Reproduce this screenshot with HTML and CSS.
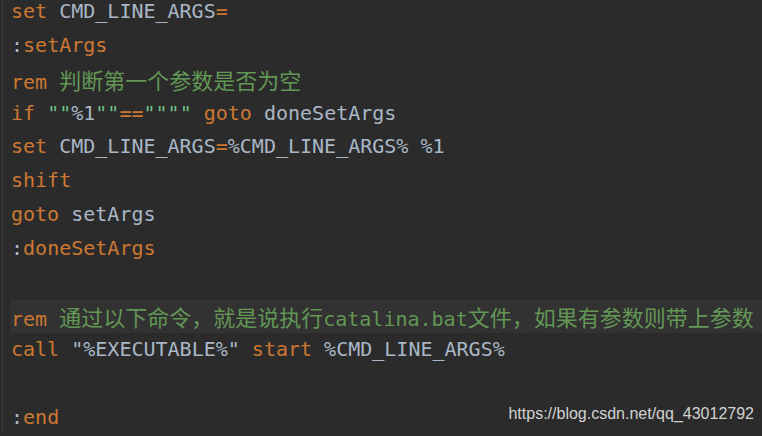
FILE: index.html
```html
<!DOCTYPE html>
<html lang="zh">
<head>
<meta charset="utf-8">
<link rel="stylesheet" href="styles.css">
</head>
<body>
<div class="editor">
  <div class="code">
    <div class="line"><span class="kw">set</span> <span class="id">CMD_LINE_ARGS</span><span class="kw">=</span></div>
    <div class="line"><span class="id">:</span><span class="kw">setArgs</span></div>
    <div class="line"><span class="kw">rem</span> <span class="cm"><span class="cjk">判断第一个参数是否为空</span></span></div>
    <div class="line"><span class="kw">if</span> <span class="str">""</span><span class="id">%1</span><span class="str">""</span><span class="kw">==</span><span class="str">""""</span> <span class="kw">goto</span> <span class="id">doneSetArgs</span></div>
    <div class="line"><span class="kw">set</span> <span class="id">CMD_LINE_ARGS</span><span class="kw">=</span><span class="id">%CMD_LINE_ARGS% %1</span></div>
    <div class="line"><span class="kw">shift</span></div>
    <div class="line"><span class="kw">goto</span> <span class="id">setArgs</span></div>
    <div class="line"><span class="id">:</span><span class="kw">doneSetArgs</span></div>
    <div class="line"></div>
    <div class="line current"><span class="kw">rem</span> <span class="cm"><span class="cjk">通过以下命令，就是说执行</span>catalina.bat<span class="cjk">文件，如果有参数则带上参数</span></span></div>
    <div class="line"><span class="kw">call</span> <span class="id">"%EXECUTABLE%"</span> <span class="kw">start</span> <span class="id">%CMD_LINE_ARGS%</span></div>
    <div class="line"></div>
    <div class="line"><span class="id">:</span><span class="kw">end</span></div>
  </div>
  <div class="watermark">https://blog.csdn.net/qq_43012792</div>
</div>
</body>
</html>
```
FILE: styles.css
```css
html, body {
  margin: 0;
  padding: 0;
  background: #2b2b2b;
  width: 762px;
  height: 436px;
  overflow: hidden;
}
.editor {
  position: relative;
  width: 762px;
  height: 436px;
  box-sizing: border-box;
  border-left: 1px solid #3d3d3d;
  margin-left: 2px;
}
.code {
  margin-top: -5px;
  padding-left: 7px;
  font-family: "DejaVu Sans Mono", "Liberation Mono", "Noto Sans CJK SC", monospace;
  font-size: 20px;
  color: #a9b7c6;
}
.line {
  height: 33.85px;
  line-height: 33.85px;
  padding-left: 1px;
  white-space: pre;
}
.current {
  background: #323232;
}
.kw { color: #cc7832; }
.id { color: #a9b7c6; }
.cm { color: #629755; }
.str { color: #6fbf87; }
.cjk {
  font-family: "Noto Sans CJK SC", sans-serif;
  font-size: 22px;
}
.watermark {
  position: absolute;
  right: 10px;
  bottom: 8px;
  font-family: "Liberation Sans", Arial, sans-serif;
  font-size: 16px;
  color: #d2d2d2;
}
```
